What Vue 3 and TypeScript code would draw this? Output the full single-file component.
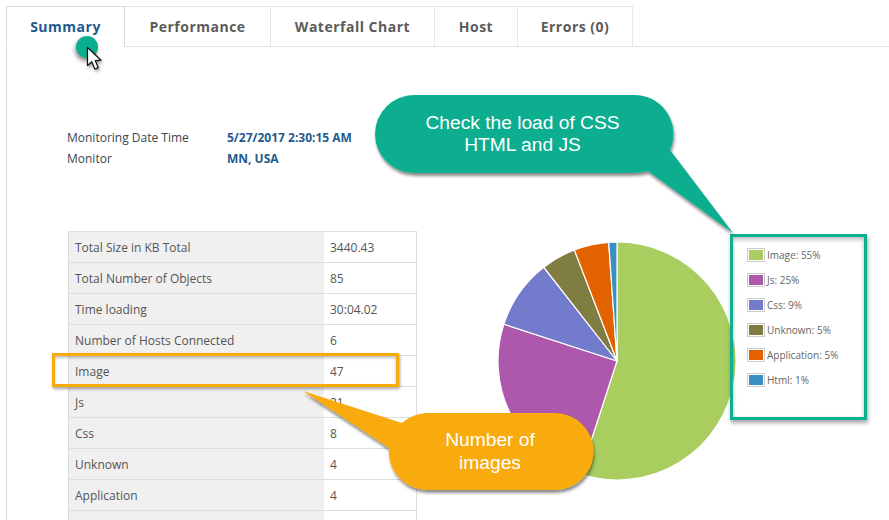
<template>
  <div class="page">
    <nav class="tabs">
      <div v-for="(tab, i) in tabs" :key="tab.name" class="tab" :class="{ active: i === 0 }" :style="{ width: tab.width + 'px' }">
        {{ tab.name }}
      </div>
      <div class="tabs-rest"></div>
    </nav>

    <main class="panel">
      <dl class="details">
        <dt>Monitoring Date Time</dt>
        <dd>5/27/2017 2:30:15 AM</dd>
        <dt>Monitor</dt>
        <dd>MN, USA</dd>
      </dl>

      <section class="report">
        <table class="stats">
          <tbody>
            <tr v-for="row in rows" :key="row.label">
              <th>{{ row.label }}</th>
              <td>{{ row.value }}</td>
            </tr>
          </tbody>
        </table>

        <div class="chart">
          <svg class="pie" width="240" height="240" viewBox="0 0 240 240">
            <path v-for="s in slices" :key="s.label" :d="s.d" :fill="s.color" stroke="#fff" stroke-width="1.2" />
          </svg>
          <ul class="legend">
            <li v-for="s in slices" :key="s.label">
              <span class="swatch"><i :style="{ background: s.color }"></i></span>
              <span>{{ s.label }}: {{ s.pct }}%</span>
            </li>
          </ul>
        </div>
      </section>
    </main>

    <!-- annotations drawn on top of the screenshot -->
    <div class="click-dot"></div>
    <svg class="cursor" width="20" height="28" viewBox="0 0 20 28">
      <path d="M1.5 1.5 L1.5 19.5 L5.8 15.8 L8.8 23 L12.2 21.6 L9.2 14.6 L15 14.2 Z" fill="#fff" stroke="#111" stroke-width="1.2" stroke-linejoin="round" />
    </svg>

    <div class="highlight"></div>

    <svg class="bubbles" width="889" height="520" viewBox="0 0 889 520">
      <defs>
        <filter id="drop" x="-10%" y="-10%" width="125%" height="125%">
          <feDropShadow dx="1" dy="3" stdDeviation="1.6" flood-color="#000" flood-opacity="0.45" />
        </filter>
      </defs>
      <path filter="url(#drop)" fill="#09ae8f" d="M414 95 H632 A39 39 0 0 1 670 150 L733 233 L648 171 Q640 173 632 173 H414 A39 39 0 0 1 414 95 Z" />
      <path filter="url(#drop)" fill="#f9ab0b" d="M427 413 H555 A38.5 38.5 0 0 1 555 490 H427 A38.5 38.5 0 0 1 389 448 L303 391 L402 423 Q414 413 427 413 Z" />
    </svg>
    <div class="note note-green">Check the load of CSS<br />HTML and JS</div>
    <div class="note note-orange">Number of<br />images</div>
  </div>
</template>

<script setup lang="ts">
import { computed } from 'vue'

const tabs = [
  { name: 'Summary', width: 119 },
  { name: 'Performance', width: 146 },
  { name: 'Waterfall Chart', width: 164 },
  { name: 'Host', width: 83 },
  { name: 'Errors (0)', width: 115 }
]

const rows = [
  { label: 'Total Size in KB Total', value: '3440.43' },
  { label: 'Total Number of Objects', value: '85' },
  { label: 'Time loading', value: '30:04.02' },
  { label: 'Number of Hosts Connected', value: '6' },
  { label: 'Image', value: '47' },
  { label: 'Js', value: '21' },
  { label: 'Css', value: '8' },
  { label: 'Unknown', value: '4' },
  { label: 'Application', value: '4' },
  { label: '', value: '' }
]

// angle is the real share of the pie, pct the rounded number in the legend
const shares = [
  { label: 'Image', pct: 55, angle: 198, color: '#a9cd5e' },
  { label: 'Js', pct: 25, angle: 90, color: '#ad57ad' },
  { label: 'Css', pct: 9, angle: 34, color: '#737ccc' },
  { label: 'Unknown', pct: 5, angle: 17, color: '#7f7d41' },
  { label: 'Application', pct: 5, angle: 17, color: '#e36200' },
  { label: 'Html', pct: 1, angle: 4, color: '#3a90c4' }
]

function point(deg: number) {
  const rad = (deg * Math.PI) / 180
  return `${(120 + 119 * Math.sin(rad)).toFixed(2)} ${(120 - 119 * Math.cos(rad)).toFixed(2)}`
}

const slices = computed(() => {
  let start = 0
  return shares.map((s) => {
    const end = start + s.angle
    const large = s.angle > 180 ? 1 : 0
    const d = `M120 120 L${point(start)} A119 119 0 ${large} 1 ${point(end)} Z`
    start = end
    return { ...s, d }
  })
})
</script>

<style>
html, body { margin: 0; background: #fff; }
</style>

<style scoped>
.page {
  position: relative;
  width: 889px;
  height: 520px;
  overflow: hidden;
  background: #fff;
  font-family: "Open Sans", sans-serif;
  color: #555;
}
.tabs {
  display: flex;
  height: 41px;
  margin: 6px 0 0 6px;
  box-sizing: border-box;
}
.tab {
  box-sizing: border-box;
  border: 1px solid #e8e8e8;
  border-left: none;
  border-bottom: 1px solid #e4e4e4;
  display: flex;
  align-items: center;
  justify-content: center;
  padding-bottom: 1px;
  font-size: 14px;
  font-weight: 700;
  letter-spacing: 0.5px;
  color: #5b5b5b;
}
.tab.active {
  border-left: 1px solid #d8d8d8;
  border-top-color: #d8d8d8;
  border-right-color: #d8d8d8;
  border-bottom-color: #fff;
  color: #1e5a8c;
}
.tabs-rest {
  flex: 1;
  border-bottom: 1px solid #e4e4e4;
}
.panel {
  margin-left: 6px;
  border-left: 1px solid #d8d8d8;
  padding: 80px 0 0 60px;
}
.details {
  display: grid;
  grid-template-columns: 160px auto;
  grid-auto-rows: 21px;
  justify-content: start;
  align-items: center;
  margin: 0;
  font-size: 12px;
  color: #3a4650;
}
.details dd {
  margin: 0;
  font-weight: 700;
  color: #1e5a8c;
}
.report {
  display: flex;
  align-items: flex-start;
  margin-top: 62px;
}
.stats {
  width: 349px;
  border-collapse: collapse;
  table-layout: fixed;
  font-size: 12px;
  margin-left: 1px;
  flex: none;
}
.stats th, .stats td {
  height: 30px;
  padding: 0 6px;
  border: 1px solid #dedede;
  text-align: left;
  font-weight: 400;
  color: #555;
}
.stats th {
  width: 243px;
  background: #f0f0f0;
  border-right: none;
}
.stats td { border-left: none; }
.chart {
  display: flex;
  align-items: flex-start;
  margin-left: 80px;
}
.pie {
  flex: none;
  margin-top: 10px;
}
.legend {
  list-style: none;
  box-sizing: border-box;
  width: 137px;
  height: 186px;
  margin: 3px 0 0 -7px;
  padding: 5px 0 0 14px;
  border: 3px solid #0cb18f;
  box-shadow: 1px 3px 4px rgba(0, 0, 0, 0.35), inset 0 3px 4px rgba(0, 0, 0, 0.22), inset 0 0 3px rgba(0, 0, 0, 0.08);
  font-size: 10px;
  color: #666;
}
.legend li {
  display: flex;
  align-items: center;
  gap: 2px;
  height: 25px;
}
.swatch {
  box-sizing: border-box;
  width: 18px;
  height: 14px;
  padding: 1px;
  border: 1px solid #ccc;
  flex: none;
}
.swatch i {
  display: block;
  width: 100%;
  height: 100%;
}
.click-dot {
  position: absolute;
  left: 76px;
  top: 36px;
  width: 22px;
  height: 22px;
  border-radius: 50%;
  background: #09ae8f;
  box-shadow: -1px 3px 4px rgba(0, 0, 0, 0.45);
}
.cursor {
  position: absolute;
  left: 86px;
  top: 46px;
  filter: drop-shadow(1px 2px 1.5px rgba(0, 0, 0, 0.4));
}
.highlight {
  position: absolute;
  left: 52px;
  top: 353px;
  width: 347px;
  height: 34px;
  box-sizing: border-box;
  border: 3px solid #f9ab0b;
  box-shadow: 1px 2px 3px rgba(0, 0, 0, 0.35), inset 0 2px 3px rgba(0, 0, 0, 0.25);
}
.bubbles {
  position: absolute;
  left: 0;
  top: 0;
}
.note {
  position: absolute;
  font-family: "Liberation Sans", Arial, sans-serif;
  font-size: 19.2px;
  line-height: 22.5px;
  text-align: center;
  color: #fff;
}
.note-green {
  left: 375px;
  top: 112px;
  width: 295px;
  line-height: 22px;
}
.note-orange {
  left: 389px;
  top: 429px;
  width: 202px;
}
</style>
